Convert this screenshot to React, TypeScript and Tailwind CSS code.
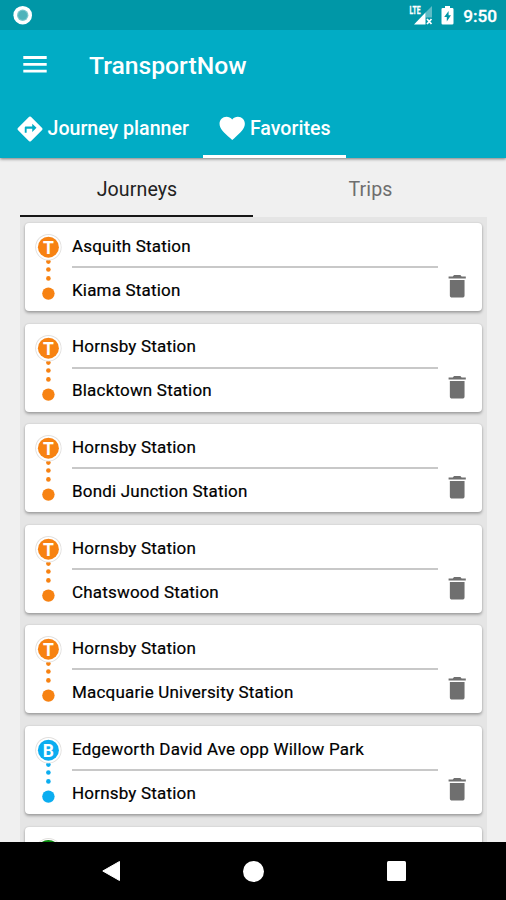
import React from "react";

type Mode = "T" | "B";
interface Journey {
  from: string;
  to: string;
  mode: Mode;
}

const ORANGE = "#f78212";
const BLUE = "#0badf0";

const journeys: Journey[] = [
  { from: "Asquith Station", to: "Kiama Station", mode: "T" },
  { from: "Hornsby Station", to: "Blacktown Station", mode: "T" },
  { from: "Hornsby Station", to: "Bondi Junction Station", mode: "T" },
  { from: "Hornsby Station", to: "Chatswood Station", mode: "T" },
  { from: "Hornsby Station", to: "Macquarie University Station", mode: "T" },
  { from: "Edgeworth David Ave opp Willow Park", to: "Hornsby Station", mode: "B" },
];

const cardClass =
  "flex h-[88px] shrink-0 rounded-[4px] bg-white shadow-[0_2px_3px_rgba(0,0,0,0.28),0_0_2px_rgba(0,0,0,0.16)]";

function RouteMarker({ mode, color }: { mode?: Mode; color: string }) {
  return (
    <svg className="h-[88px] w-[47px] shrink-0" viewBox="0 0 47 88">
      <circle cx="23.4" cy="38.6" r="2.3" fill={color} />
      <circle cx="23.4" cy="24.2" r="13.2" fill="#e2e0de" />
      <circle cx="23.4" cy="24.2" r="12.3" fill="#fff" />
      <circle cx="23.4" cy="24.2" r={mode ? 10.5 : 11.3} fill={color} />
      {mode && (
        <text
          x="23.4"
          y="30.8"
          textAnchor="middle"
          fill="#fff"
          className="font-['Roboto',sans-serif] text-[17.5px] font-bold"
        >
          {mode}
        </text>
      )}
      <circle cx="23.4" cy="46.5" r="2.3" fill={color} />
      <circle cx="23.4" cy="55.4" r="2.3" fill={color} />
      <circle cx="23.4" cy="70.6" r="6.2" fill={color} />
    </svg>
  );
}

function JourneyCard({ journey }: { journey: Journey }) {
  return (
    <div className={cardClass}>
      <RouteMarker mode={journey.mode} color={journey.mode === "T" ? ORANGE : BLUE} />
      <div className="flex w-[366px] shrink-0 flex-col whitespace-nowrap text-[17px] tracking-[0.19px] text-black [-webkit-text-stroke:0.2px_#000]">
        <div className="flex h-[43px] items-center pt-[4px]">{journey.from}</div>
        <div className="h-[2px] bg-[#c8c8c8]" />
        <div className="flex h-[43px] items-center pt-[2px]">{journey.to}</div>
      </div>
      <svg className="mt-[48px] ml-[4.3px] size-[30.4px] shrink-0" viewBox="0 0 24 24" fill="#6f6f6f">
        <path d="M6.2 19.3c0 1.1.7 1.7 1.7 1.7h8.2c1 0 1.7-.6 1.7-1.7V7.2H6.2v12.1zM18.8 4.3h-3.300l-1-1.100h-5l-1 1.100H5.200v1.700h13.600V4.300z" />
      </svg>
    </div>
  );
}

export default function App() {
  return (
    <div className="flex h-[900px] w-[506px] flex-col overflow-hidden bg-[#f0f0f0] font-['Roboto',sans-serif]">
      <div className="z-20 flex h-[30px] shrink-0 items-center justify-between bg-[#0097a7] pr-[9px] pl-[13px]">
        <svg className="size-[20px]" viewBox="0 0 20 20">
          <circle cx="9.7" cy="10.2" r="9.3" fill="#fff" />
          <circle cx="9.7" cy="10.2" r="5.7" fill="#7cc8cd" />
          <circle cx="9.7" cy="10.2" r="4.5" fill="#4fb3bb" />
        </svg>
        <div className="flex items-center">
          <svg className="h-[20px] w-[24px]" viewBox="0 0 24 20">
            <text
              x="0.5"
              y="8.6"
              fill="#fff"
              stroke="#fff"
              strokeWidth="0.3"
              textLength="11"
              lengthAdjust="spacingAndGlyphs"
              className="font-['Roboto',sans-serif] text-[10px] font-bold"
            >
              LTE
            </text>
            <path d="M23 1v11.500h-6.500V7.500z" fill="#5fbcc6" />
            <path d="M16.500 7.500v12H5z" fill="#fff" />
            <path d="M18 14l4.500 5M22.500 14l-4.500 5" stroke="#fff" strokeWidth="1.8" />
          </svg>
          <svg className="ml-[8px] h-[20px] w-[13px]" viewBox="0 0 13 20">
            <path d="M4 1h5v2h2.200q1.300 0 1.300 1.300v14q0 1.300-1.300 1.300H1.800Q.5 19.600.5 18.300V4.300Q.5 3 1.800 3H4z" fill="#fff" />
            <path d="M7.600 6L3.200 12h2.600v4.500L10 10.300H7.600z" fill="#0097a7" />
          </svg>
          <span className="mt-[2px] ml-[9px] text-[17.2px] leading-[20px] font-medium text-white [-webkit-text-stroke:0.3px_#fff]">9:50</span>
        </div>
      </div>

      <header className="z-10 flex h-[127.5px] shrink-0 flex-col bg-[#01acc5] text-white shadow-[0_1px_3px_rgba(0,0,0,0.5)]">
        <div className="flex h-[70px] items-center">
          <svg className="mb-[2px] ml-[23px] h-[18px] w-[24px]" viewBox="0 0 24 18" stroke="#fff" strokeWidth="2.8">
            <path d="M.3 2.500h23.400M.3 9.300h23.400M.3 16.100h23.400" />
          </svg>
          <h1 className="mt-[2px] ml-[42px] text-[24.7px] leading-[30px] font-medium">TransportNow</h1>
        </div>
        <nav className="flex flex-1 text-[19.6px] font-medium">
          <div className="flex w-[203px] items-center pl-[15px]">
            <svg className="size-[30px] shrink-0" viewBox="0 0 24 24" fill="#fff">
              <path d="M21.710 11.290l-9-9a.996.996 0 0 0-1.410 0l-9 9a.996.996 0 0 0 0 1.410l9 9c.390.390 1.020.390 1.410 0l9-9a.996.996 0 0 0 0-1.410zM13.800 14.300V11.700H9.300v3.300H7.800v-4.200c0-.5.4-.9.900-.9h5.100V7.700l3.400 3.300-3.400 3.300z" />
            </svg>
            <span className="ml-[2.5px] whitespace-nowrap">Journey planner</span>
          </div>
          <div className="flex w-[143px] items-center border-b-[3px] border-white pt-[3px] pl-[14px]">
            <svg className="mb-[1px] size-[30.4px] shrink-0" viewBox="0 0 24 24" fill="#fff">
              <path d="M12 21.350l-1.450-1.320C5.400 15.360 2 12.280 2 8.500 2 5.420 4.420 3 7.500 3c1.740 0 3.410.810 4.500 2.090C13.090 3.810 14.760 3 16.500 3 19.580 3 22 5.420 22 8.500c0 3.780-3.400 6.860-8.550 11.540L12 21.350z" />
            </svg>
            <span className="ml-[2.5px]">Favorites</span>
          </div>
        </nav>
      </header>

      <main className="flex min-h-0 flex-1 flex-col overflow-hidden px-[20px]">
        <div className="flex h-[59.5px] w-[467px] shrink-0 text-[19.6px] tracking-[0.1px]">
          <div className="flex w-[233px] items-center justify-center border-b-2 border-[#161616] pt-[6px] pl-[1px] text-[#222]">Journeys</div>
          <div className="flex flex-1 items-center justify-center pt-[4px] pl-[1px] text-[#6e6e6e]">Trips</div>
        </div>
        <div className="flex min-h-0 w-[467px] flex-1 flex-col gap-[12.6px] overflow-hidden bg-[#e5e5e5] pt-[6px] pr-[5px] pl-[5px]">
          {journeys.map((journey, i) => (
            <JourneyCard key={i} journey={journey} />
          ))}
          <div className={cardClass}>
            <RouteMarker color="#078a0b" />
          </div>
        </div>
      </main>

      <footer className="flex h-[58px] shrink-0 items-center bg-black">
        <svg className="ml-[101px] h-[22px] w-[20px]" viewBox="0 0 20 22">
          <path d="M18.500 1.500v19L1.800 11z" fill="#fff" stroke="#fff" strokeLinejoin="round" />
        </svg>
        <div className="ml-[122px] size-[21px] rounded-full bg-white" />
        <div className="ml-[122.5px] size-[19.5px] rounded-[1.5px] bg-white" />
      </footer>
    </div>
  );
}
